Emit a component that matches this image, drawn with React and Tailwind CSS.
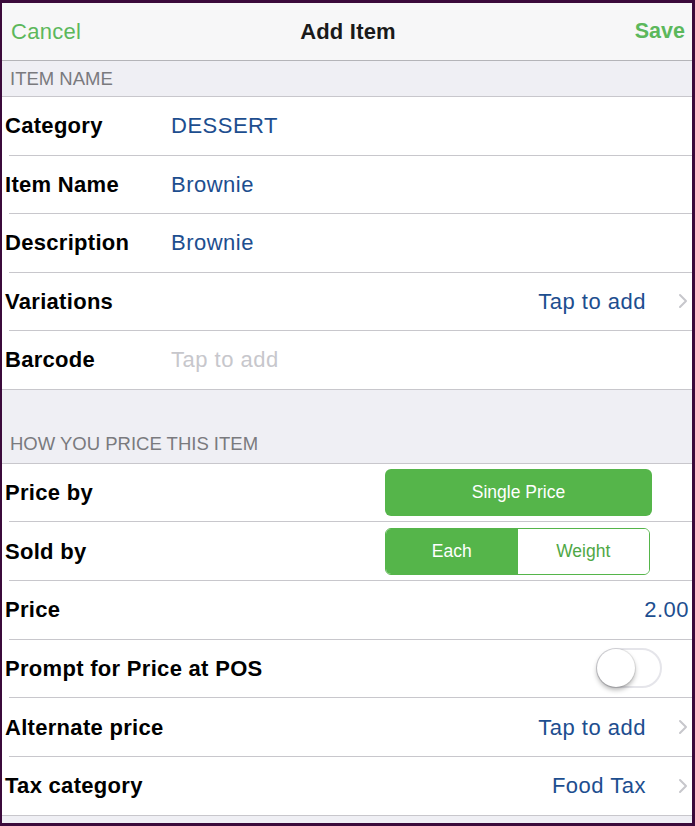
import React from 'react';

const font = { fontFamily: '"Liberation Sans", Arial, sans-serif' };

function Chevron() {
  return (
    <svg width="10" height="16" viewBox="0 0 10 16" className="ml-[32px] shrink-0">
      <polyline points="2,2 8,8 2,14" fill="none" stroke="#c7c7cc" strokeWidth="2" strokeLinecap="round" strokeLinejoin="round" />
    </svg>
  );
}

function Row({ label, children, h = 'h-[57.5px]', last = false }) {
  return (
    <div className="bg-white shrink-0">
      <div className={`${h} flex items-center pl-[3px] pr-[3px]`}>
        <div className="w-[166px] shrink-0 text-[22px] font-bold tracking-[0.3px] text-black whitespace-nowrap">{label}</div>
        <div className="flex-1 flex items-center min-w-0">{children}</div>
      </div>
      {last ? (
        <div className="h-px bg-[#c8c7cc]" />
      ) : (
        <div className="ml-[7px] h-px bg-[#c8c7cc]" />
      )}
    </div>
  );
}

function Value({ children }) {
  return <span className="text-[22px] tracking-[0.5px] text-[#1d4e8f]">{children}</span>;
}

function TapRow({ text }) {
  return (
    <div className="flex-1 flex items-center justify-end pr-[1px]">
      <Value>{text}</Value>
      <Chevron />
    </div>
  );
}

export default function App() {
  return (
    <div
      className="w-[695px] h-[826px] border-[#3b0a3b] border-t-[3px] border-l-2 border-r-[3px] border-b-[3px] bg-[#efeff4] flex flex-col overflow-hidden"
      style={font}
    >
      {/* Nav bar */}
      <div className="h-[58px] bg-[#f7f7f8] grid grid-cols-[1fr_auto_1fr] items-center pl-[9px] pr-[7px] border-b border-[#b4b4b8] shrink-0">
        <span className="text-[22px] tracking-[0.3px] text-[#5cb85c] justify-self-start">Cancel</span>
        <span className="text-[22px] font-semibold tracking-[0.2px] text-[#1a1a1a]">Add Item</span>
        <span className="text-[21.5px] font-bold text-[#5cb85c] justify-self-end">Save</span>
      </div>

      {/* Item name section */}
      <div className="h-[36px] flex items-center pl-[8px] border-b border-[#c8c7cc] shrink-0">
        <span className="text-[18.5px] text-[#7a7a7e]">ITEM NAME</span>
      </div>
      <Row label="Category"><Value>DESSERT</Value></Row>
      <Row label="Item Name"><Value>Brownie</Value></Row>
      <Row label="Description"><Value>Brownie</Value></Row>
      <Row label="Variations"><TapRow text="Tap to add" /></Row>
      <Row label="Barcode" last><span className="text-[22px] tracking-[0.5px] text-[#c7c7cc]">Tap to add</span></Row>

      {/* Pricing section */}
      <div className="h-[74px] flex items-end pl-[8px] pb-[5px] border-b border-[#c8c7cc] shrink-0">
        <span className="text-[18.5px] text-[#7a7a7e]">HOW YOU PRICE THIS ITEM</span>
      </div>
      <Row label="Price by" h="h-[57.7px]">
        <div className="flex-1 flex justify-end pr-[37px]">
          <div className="w-[267px] h-[47px] rounded-[6px] bg-[#55b54a] flex items-center justify-center text-[17.5px] text-white">
            Single Price
          </div>
        </div>
      </Row>
      <Row label="Sold by" h="h-[57.7px]">
        <div className="flex-1 flex justify-end pr-[39px]">
          <div className="w-[265px] h-[47px] rounded-[6px] border border-[#55b54a] flex overflow-hidden text-[17.5px]">
            <div className="w-1/2 bg-[#55b54a] text-white flex items-center justify-center">Each</div>
            <div className="w-1/2 bg-white text-[#4fa846] flex items-center justify-center">Weight</div>
          </div>
        </div>
      </Row>
      <Row label="Price" h="h-[57.7px]">
        <div className="flex-1 flex justify-end">
          <Value>2.00</Value>
        </div>
      </Row>
      <Row label="Prompt for Price at POS" h="h-[57.7px]">
        <div className="flex-1 flex justify-end pr-[27px]">
          <div className="w-[66px] h-[40px] rounded-full border-2 border-[#e5e5ea] bg-white flex items-center">
            <div className="w-[38px] h-[38px] rounded-full bg-white shadow-[0_3px_5px_rgba(0,0,0,0.3),0_0_0_1px_rgba(0,0,0,0.08)] -ml-[1px]" />
          </div>
        </div>
      </Row>
      <Row label="Alternate price" h="h-[57.7px]"><TapRow text="Tap to add" /></Row>
      <Row label="Tax category" h="h-[57.7px]" last><TapRow text="Food Tax" /></Row>
      <div className="flex-1" />
    </div>
  );
}
